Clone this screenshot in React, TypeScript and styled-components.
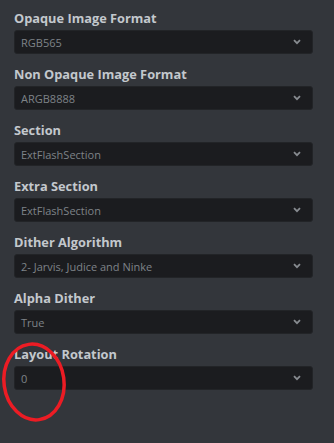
import React from 'react';
import styled, { createGlobalStyle } from 'styled-components';

const GlobalStyle = createGlobalStyle`
  html, body {
    margin: 0;
    padding: 0;
    background: #33363b;
  }
  body {
    font-family: "Open Sans", "Liberation Sans", sans-serif;
  }
`;

const Panel = styled.div`
  position: relative;
  width: 334px;
  height: 443px;
  box-sizing: border-box;
  padding: 10px 21px 0 14px;
  background: #33363b;
  display: flex;
  flex-direction: column;
  gap: 12px;
`;

const Field = styled.div`
  display: flex;
  flex-direction: column;
  gap: 4px;
`;

const Label = styled.div`
  font-size: 12.8px;
  line-height: 16px;
  font-weight: 700;
  color: #c3c8cd;
  white-space: nowrap;
`;

const SelectBox = styled.div`
  height: 24px;
  box-sizing: border-box;
  display: flex;
  align-items: center;
  justify-content: space-between;
  padding: 0 11px 0 6px;
  background: #1b1c1f;
  border: 1px solid #222427;
  border-radius: 3px;
`;

const Value = styled.span`
  font-size: 11px;
  color: #7e8388;
`;

const Chevron = styled.svg`
  width: 8px;
  height: 6px;
  flex: none;
`;

const Annotation = styled.svg`
  position: absolute;
  left: 0;
  top: 340px;
  width: 72px;
  height: 84px;
  pointer-events: none;
`;

const FIELDS = [
  { label: 'Opaque Image Format', value: 'RGB565' },
  { label: 'Non Opaque Image Format', value: 'ARGB8888' },
  { label: 'Section', value: 'ExtFlashSection' },
  { label: 'Extra Section', value: 'ExtFlashSection' },
  { label: 'Dither Algorithm', value: '2- Jarvis, Judice and Ninke' },
  { label: 'Alpha Dither', value: 'True' },
  { label: 'Layout Rotation', value: '0' },
];

const App: React.FC = () => (
  <>
    <GlobalStyle />
    <Panel>
      {FIELDS.map((f) => (
        <Field key={f.label}>
          <Label>{f.label}</Label>
          <SelectBox>
            <Value>{f.value}</Value>
            <Chevron viewBox="0 0 8 6">
              <path d="M1 1.2 L4 4.2 L7 1.2" fill="none" stroke="#878b90" strokeWidth="1.8" />
            </Chevron>
          </SelectBox>
        </Field>
      ))}
      <Annotation viewBox="0 0 72 84">
        <ellipse cx="34" cy="42" rx="30" ry="38" fill="none" stroke="#ec1c24" strokeWidth="3.5" transform="rotate(-8 34 42)" />
      </Annotation>
    </Panel>
  </>
);

export default App;
